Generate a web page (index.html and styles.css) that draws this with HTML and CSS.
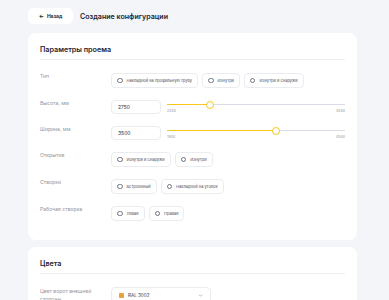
FILE: index.html
```html
<!DOCTYPE html>
<html lang="ru">

<head>
  <meta charset="UTF-8" />
  <meta name="viewport" content="width=device-width, initial-scale=1.0" />
  <title>Создание конфигурации</title>
  <link rel="stylesheet" href="styles.css">
</head>

<body>

  <div class="page">
    <div class="topbar">
      <button class="back"><span class="arrow">←</span> Назад</button>
      <h1 class="title">Создание конфигурации</h1>
    </div>

    <div class="card">
      <div class="card-title">Параметры проема</div>

      <div class="rows">
        <div class="row">
          <div class="label">Тип</div>
          <div class="options">
            <div class="opt"><span class="radio"></span>Накладной на профильную трубу</div>
            <div class="opt"><span class="radio"></span>Изнутри</div>
            <div class="opt"><span class="radio"></span>Изнутри и снаружи</div>
          </div>
        </div>

        <div class="row">
          <div class="label">Высота, мм</div>
          <div class="range-field">
            <input type="text" class="num" value="2750" />
            <div class="slider">
              <div class="track">
                <div class="fill" style="width: 23.9%"></div>
                <div class="thumb" style="left: 23.9%"></div>
              </div>
              <div class="limits"><span>2200</span><span>4500</span></div>
            </div>
          </div>
        </div>

        <div class="row">
          <div class="label">Ширина, мм</div>
          <div class="range-field">
            <input type="text" class="num" value="3500" />
            <div class="slider">
              <div class="track">
                <div class="fill" style="width: 61.5%"></div>
                <div class="thumb" style="left: 61.5%"></div>
              </div>
              <div class="limits"><span>1900</span><span>4500</span></div>
            </div>
          </div>
        </div>

        <div class="row">
          <div class="label">Открытие</div>
          <div class="options">
            <div class="opt"><span class="radio"></span>Изнутри и снаружи</div>
            <div class="opt"><span class="radio"></span>Изнутри</div>
          </div>
        </div>

        <div class="row">
          <div class="label">Створки</div>
          <div class="options">
            <div class="opt"><span class="radio"></span>Встроенный</div>
            <div class="opt"><span class="radio"></span>Накладной на уголок</div>
          </div>
        </div>

        <div class="row">
          <div class="label">Рабочая створка</div>
          <div class="options">
            <div class="opt"><span class="radio"></span>Левая</div>
            <div class="opt"><span class="radio"></span>Правая</div>
          </div>
        </div>
      </div>
    </div>

    <div class="card">
      <div class="card-title">Цвета</div>

      <div class="rows">
        <div class="row">
          <div class="label wrap">Цвет ворот внешней стороны</div>
          <div class="select">
            <span class="swatch"></span>
            <span class="select-text">RAL 3002</span>
            <svg class="chevron" viewBox="0 0 10 10" width="5" height="5">
              <path d="M2 3.5 L5 6.5 L8 3.5" fill="none" stroke="#9a9cab" stroke-width="1.4" />
            </svg>
          </div>
        </div>
      </div>
    </div>
  </div>

</body>

</html>
```

FILE: styles.css
```css
:root {
  --bg: #f4f5f9;
  --card: #ffffff;
  --text: #22232f;
  --muted: #94969f;
  --line: #eceef3;
  --border: #ebecf1;
  --yellow: #f8c81c;
  --track: #d9dbe6;
}

body {
  margin: 0;
  font-family: Inter, 'Liberation Sans', sans-serif;
  background: var(--bg);
  color: var(--text);
}

.page {
  padding: 8px 32px 0 28px;
}

.topbar {
  display: flex;
  align-items: center;
  gap: 7px;
  height: 16px;
}

.back {
  width: 45px;
  height: 16px;
  padding: 0;
  border: none;
  border-radius: 5px;
  background: var(--card);
  color: var(--text);
  font-family: inherit;
  font-size: 5px;
  font-weight: 700;
  display: flex;
  align-items: center;
  justify-content: center;
  gap: 3px;
}

.back .arrow {
  font-size: 5.5px;
}

.title {
  margin: 0;
  font-size: 7.1px;
  font-weight: 600;
}

.card {
  margin-top: 9px;
  background: var(--card);
  border-radius: 8px;
  padding: 0 12px 19px;
}

.card + .card {
  margin-top: 7px;
}

.card-title {
  box-sizing: border-box;
  height: 27px;
  padding-top: 12px;
  line-height: 9px;
  font-size: 7.2px;
  font-weight: 600;
  border-bottom: 1px solid var(--line);
}

.rows {
  padding-top: 13px;
  display: flex;
  flex-direction: column;
  gap: 12px;
}

.row {
  display: grid;
  grid-template-columns: 71px 1fr;
  align-items: start;
}

.label {
  font-size: 5.1px;
  line-height: 7px;
  color: var(--muted);
}

.label.wrap {
  width: 56px;
  line-height: 8px;
}

.options {
  display: flex;
  gap: 4px;
}

.opt {
  box-sizing: border-box;
  height: 15px;
  display: flex;
  align-items: center;
  gap: 4px;
  padding: 0 5px;
  border: 1px solid var(--border);
  border-radius: 4px;
  font-size: 4px;
  color: #4a4c58;
  white-space: nowrap;
}

.radio {
  box-sizing: border-box;
  width: 5.5px;
  height: 5.5px;
  border: 0.8px solid #6f7180;
  border-radius: 50%;
}

.range-field {
  display: flex;
  align-items: flex-start;
  gap: 6px;
}

.num {
  box-sizing: border-box;
  width: 50px;
  height: 14px;
  margin: 0;
  padding: 0 6px;
  border: 1px solid var(--border);
  border-radius: 4px;
  font-family: inherit;
  font-size: 5px;
  color: #333;
  outline: none;
}

.slider {
  flex: 1;
  padding-top: 4px;
}

.track {
  position: relative;
  height: 1px;
  background: var(--track);
}

.fill {
  height: 1px;
  background: var(--yellow);
}

.thumb {
  position: absolute;
  top: -3.5px;
  width: 8px;
  height: 8px;
  margin-left: -4px;
  box-sizing: border-box;
  border: 1px solid var(--yellow);
  border-radius: 50%;
  background: #fff;
}

.limits {
  display: flex;
  justify-content: space-between;
  margin-top: 4px;
  font-size: 3.6px;
  color: var(--muted);
}

.select {
  box-sizing: border-box;
  width: 100px;
  height: 16px;
  display: flex;
  align-items: center;
  gap: 4px;
  padding: 0 7px;
  border: 1px solid var(--border);
  border-radius: 4px;
  font-size: 4.6px;
  color: #3a3c48;
}

.swatch {
  width: 5px;
  height: 5px;
  border-radius: 1px;
  background: #e8a23c;
}

.select-text {
  flex: 1;
}
```
